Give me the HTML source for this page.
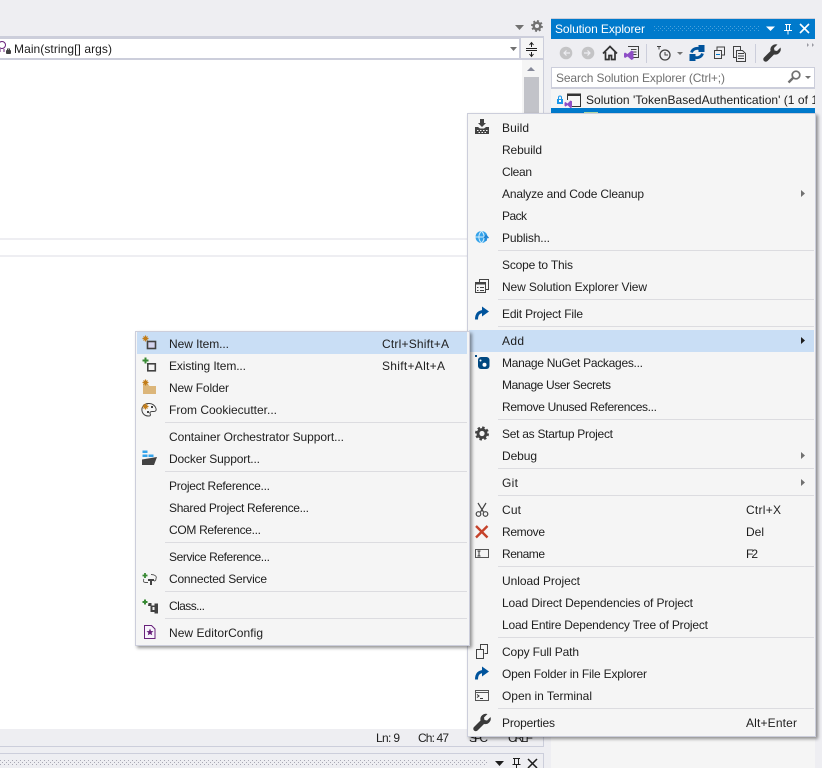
<!DOCTYPE html>
<html><head><meta charset="utf-8">
<style>
html,body{margin:0;padding:0;background:#eeeef2;overflow:hidden}
svg{display:block;position:absolute;left:0;top:0}
text{font-family:"Liberation Sans",sans-serif;font-size:12px;fill:#1e1e1e}
</style></head><body>
<svg width="822" height="768" viewBox="0 0 822 768" xmlns="http://www.w3.org/2000/svg">
<defs>
<filter id="sh" x="-5%" y="-5%" width="110%" height="110%"><feDropShadow dx="2" dy="2" stdDeviation="1.6" flood-color="#000" flood-opacity=".42"/></filter>
<pattern id="dots" width="4" height="4" patternUnits="userSpaceOnUse"><rect width="1" height="1" fill="#a8a8b4"/><rect x="2" y="2" width="1" height="1" fill="#a8a8b4"/></pattern>
<pattern id="dotsb" width="4" height="4" patternUnits="userSpaceOnUse"><rect width="1" height="1" fill="#4aa2dc"/><rect x="2" y="2" width="1" height="1" fill="#4aa2dc"/></pattern>
</defs>
<rect width="822" height="768" fill="#eeeef2"/>

<!-- editor -->
<rect x="0" y="36" width="544" height="711" fill="#cccedb"/>
<rect x="0" y="39" width="519" height="19" fill="#fff"/>
<rect x="521" y="38" width="22" height="20" fill="#f5f5f5"/>
<rect x="0" y="60" width="522" height="669" fill="#fff"/>
<rect x="522" y="60" width="21" height="669" fill="#f5f5f5"/>
<rect x="0" y="729" width="543" height="17" fill="#eeeef2"/>
<rect x="524" y="77" width="15" height="200" fill="#c2c3c9"/>
<path d="M527 71l4-4 4 4z" fill="#868999"/>
<rect x="0" y="238" width="522" height="2" fill="#eeeef2"/>
<rect x="0" y="255" width="522" height="2" fill="#eeeef2"/>
<path d="M515 25h9l-4.500 5z" fill="#717171"/>
<g transform="translate(537,26)"><circle r="3.300" fill="none" stroke="#717171" stroke-width="2.500"/><circle r="5" fill="none" stroke="#717171" stroke-width="1.800" stroke-dasharray="2 1.900"/></g>
<path d="M510 47h7l-3.500 4z" fill="#717171"/>
<path d="M526 48.500h11M526 50.500h11" stroke="#1e1e1e" stroke-width="1"/>
<path d="M531.500 43v4M531.500 52v4M529.500 45l2-2.500 2 2.500M529.500 54l2 2.500 2-2.500" stroke="#1e1e1e" fill="none"/>
<g fill="none" stroke="#68217a"><circle cx="2" cy="45" r="3.500"/><path d="M0 49v3M4 49v3"/></g>
<rect x="6" y="50" width="5" height="4" rx="1" fill="#424242"/><path d="M7.500 50v-1h2v1" stroke="#424242" fill="none"/>
<text x="14" y="53" textLength="98" lengthAdjust="spacing">Main(string[] args)</text>

<!-- status -->
<text x="376" y="742" textLength="24" lengthAdjust="spacing">Ln: 9</text>
<text x="418" y="742" textLength="31" lengthAdjust="spacing">Ch: 47</text>
<text x="469" y="742" textLength="19" lengthAdjust="spacing">SPC</text>
<text x="508" y="742" textLength="25" lengthAdjust="spacing">CRLF</text>

<!-- bottom pane header -->
<rect x="0" y="746" width="544" height="1" fill="#cccedb"/>
<rect x="0" y="747" width="551" height="6" fill="#eeeef2"/>
<rect x="0" y="753" width="544" height="15" fill="#cccedb"/>
<rect x="0" y="754" width="543" height="14" fill="#eeeef2"/>
<rect x="0" y="760" width="487" height="6" fill="url(#dots)"/>
<path d="M495 761h9l-4.500 5z" fill="#1e1e1e"/>
<path d="M513 758.500h7M514.500 758.500v6h4v-6M512.500 764.500h8M516.500 764.500v4" stroke="#1e1e1e" fill="none"/>
<path d="M528 759l9 9M537 759l-9 9" stroke="#1e1e1e" stroke-width="1.500"/>

<!-- solution explorer -->
<rect x="551" y="18" width="264" height="750" fill="#f5f5f5"/>
<rect x="551" y="18" width="264" height="21" fill="#007acc"/>
<rect x="551" y="18" width="264" height="1" fill="#cccedb"/>
<rect x="551" y="39" width="264" height="29" fill="#eeeef2"/>
<rect x="551" y="67" width="264" height="22" fill="#cccedb"/>
<rect x="552" y="68" width="262" height="19" fill="#fff"/>
<rect x="551" y="108" width="264" height="10" fill="#007acc"/>
<rect x="584" y="112" width="14" height="6" fill="#b5d9a5"/>
<text x="555" y="33" textLength="90" lengthAdjust="spacing" style="fill:#fff">Solution Explorer</text>
<rect x="653" y="25" width="107" height="6" fill="url(#dotsb)"/>
<path d="M766 26.500h9l-4.500 4.500z" fill="#fff"/>
<path d="M785 24.500h6M786.500 24.500v6h3v-6M784 30.500h8M788 30.500v4" stroke="#fff" fill="none"/>
<path d="M800 24l9 9M809 24l-9 9" stroke="#fff" stroke-width="1.600"/>

<!-- SE toolbar -->
<circle cx="566" cy="53" r="6.300" fill="#c4c4c6"/><path d="M570 53h-6M566.500 50.500l-2.500 2.500 2.500 2.500" stroke="#eeeef2" fill="none" stroke-width="1.200"/>
<circle cx="588" cy="53" r="6.300" fill="#c4c4c6"/><path d="M584 53h6M587.500 50.500l2.500 2.500-2.500 2.500" stroke="#eeeef2" fill="none" stroke-width="1.200"/>
<path d="M603 53.500l7-7 7 7M605.500 52v7.500h3.500v-4h2.500v4h3.500v-7.500" fill="none" stroke="#333" stroke-width="1.700"/>
<path d="M628 46.500h10.500v11h-5" fill="none" stroke="#424242"/><path d="M631 49.500h5.500M631 52h5.500M633 54.500h3.500" stroke="#424242"/>
<path d="M625 52.500l2.500 1.500 4-3.500 2 1v7.500l-2 1-4-3.500-2.500 1.500-1-1v-3.500z" fill="#8e4ec6"/>
<rect x="646" y="44" width="1" height="19" fill="#cccedb"/>
<circle cx="665" cy="55" r="5" fill="none" stroke="#424242" stroke-width="1.300"/><path d="M665 52v3h3M657 46.500h4M659 46.500v3" stroke="#424242" fill="none"/>
<path d="M677 52h6l-3 3z" fill="#717171"/>
<g fill="none" stroke="#00539c" stroke-width="2.800"><path d="M691.500 52.500a6 5.500 0 0 1 9.500-3"/><path d="M702.500 53.500a6 5.500 0 0 1-9.500 3"/></g>
<path d="M698.500 45h1l5 0v7h-6zM695.500 61h-6v-7h6z" fill="#00539c"/>
<path d="M714.500 50.500h7v8h-7zM717 50v-3h7.500v8h-3" fill="none" stroke="#424242"/><path d="M716 54.500h4" stroke="#007acc"/>
<path d="M736.500 50.500h6l3 3v8h-9zM736 57.500h-2.500v-11h7v3.500" fill="none" stroke="#424242"/><path d="M738 53.500h6M738 56h6M738 58.500h6" stroke="#424242"/>
<rect x="755" y="44" width="1" height="19" fill="#cccedb"/>
<path d="M764 57.500l6.500-6.500a5.500 5.500 0 0 1 7-6.500l-3.500 3.500 .5 2.500 2.500.5 3.500-3.500a5.500 5.500 0 0 1-6.500 7l-6.500 6.500a2.200 2.200 0 0 1-3.500-3.500z" fill="#3a3a3a"/>
<path d="M807 43l2 2-2 2zM812 43l2 2-2 2z" fill="#9a9aa2"/>
<text x="556" y="82" textLength="169" lengthAdjust="spacing" style="fill:#717171">Search Solution Explorer (Ctrl+;)</text>
<circle cx="796" cy="75" r="3.800" fill="none" stroke="#717171" stroke-width="1.700"/><path d="M793 78l-4.500 4.500" stroke="#717171" stroke-width="2.400"/>
<path d="M805 76h6l-3 3z" fill="#717171"/>

<rect x="557" y="99" width="6" height="5" fill="#1c97ea"/><rect x="559" y="100" width="2" height="2" fill="#fff"/><path d="M558.500 99v-1.500a1.500 1.500 0 0 1 3 0v1.500" fill="none" stroke="#1c97ea"/>
<path d="M570 106.500h10.500v-12.500h-13v6" fill="none" stroke="#333"/><rect x="567" y="94" width="14" height="2" fill="#333"/>
<path d="M565.500 102l2 1.500 3-3 1.500.8v6l-1.500.8-3-3-2 1.500-1-.8v-3z" fill="#8e4ec6"/>
<text x="586" y="104" textLength="232" lengthAdjust="spacing">Solution 'TokenBasedAuthentication' (1 of 1</text>
<rect x="815" y="18" width="7" height="750" fill="#eeeef2"/>

<!-- right context menu -->
<g filter="url(#sh)"><rect x="467.500" y="113.500" width="348" height="623" fill="#f5f5f5" stroke="#cccedb"/></g>
<rect x="469" y="330" width="345" height="22" fill="#c9def5"/>
<g fill="#dcdce0">
<rect x="498" y="250" width="316" height="1"/><rect x="498" y="299" width="316" height="1"/><rect x="498" y="326" width="316" height="1"/><rect x="498" y="419" width="316" height="1"/><rect x="498" y="468" width="316" height="1"/><rect x="498" y="495" width="316" height="1"/><rect x="498" y="566" width="316" height="1"/><rect x="498" y="637" width="316" height="1"/><rect x="498" y="708" width="316" height="1"/>
</g>
<g>
<text x="502" y="132" textLength="27" lengthAdjust="spacing">Build</text>
<text x="502" y="154" textLength="40" lengthAdjust="spacing">Rebuild</text>
<text x="502" y="176" textLength="30" lengthAdjust="spacing">Clean</text>
<text x="502" y="198" textLength="142" lengthAdjust="spacing">Analyze and Code Cleanup</text>
<text x="502" y="220" textLength="25" lengthAdjust="spacing">Pack</text>
<text x="502" y="242" textLength="48" lengthAdjust="spacing">Publish...</text>
<text x="502" y="269" textLength="71" lengthAdjust="spacing">Scope to This</text>
<text x="502" y="291" textLength="145" lengthAdjust="spacing">New Solution Explorer View</text>
<text x="502" y="318" textLength="81" lengthAdjust="spacing">Edit Project File</text>
<text x="502" y="345" textLength="22" lengthAdjust="spacing">Add</text>
<text x="502" y="367" textLength="141" lengthAdjust="spacing">Manage NuGet Packages...</text>
<text x="502" y="389" textLength="109" lengthAdjust="spacing">Manage User Secrets</text>
<text x="502" y="411" textLength="155" lengthAdjust="spacing">Remove Unused References...</text>
<text x="502" y="438" textLength="111" lengthAdjust="spacing">Set as Startup Project</text>
<text x="502" y="460" textLength="35" lengthAdjust="spacing">Debug</text>
<text x="502" y="487" textLength="16" lengthAdjust="spacing">Git</text>
<text x="502" y="514" textLength="19" lengthAdjust="spacing">Cut</text>
<text x="502" y="536" textLength="43" lengthAdjust="spacing">Remove</text>
<text x="502" y="558" textLength="43" lengthAdjust="spacing">Rename</text>
<text x="502" y="585" textLength="78" lengthAdjust="spacing">Unload Project</text>
<text x="502" y="607" textLength="191" lengthAdjust="spacing">Load Direct Dependencies of Project</text>
<text x="502" y="629" textLength="206" lengthAdjust="spacing">Load Entire Dependency Tree of Project</text>
<text x="502" y="656" textLength="77" lengthAdjust="spacing">Copy Full Path</text>
<text x="502" y="678" textLength="145" lengthAdjust="spacing">Open Folder in File Explorer</text>
<text x="502" y="700" textLength="90" lengthAdjust="spacing">Open in Terminal</text>
<text x="502" y="727" textLength="53" lengthAdjust="spacing">Properties</text>
<text x="746" y="514" textLength="35" lengthAdjust="spacing">Ctrl+X</text>
<text x="746" y="536" textLength="18" lengthAdjust="spacing">Del</text>
<text x="746" y="558" textLength="12" lengthAdjust="spacing">F2</text>
<text x="746" y="727" textLength="51" lengthAdjust="spacing">Alt+Enter</text>
</g>
<path d="M801 190l4 3.500-4 3.500zM801 452l4 3.500-4 3.500zM801 479l4 3.500-4 3.500z" fill="#717171"/>
<path d="M801 337l4 3.500-4 3.500z" fill="#1e1e1e"/>
<!-- right icons -->
<path d="M480 119h4v4h2l-4 4-4-4h2z" fill="#424242"/>
<path d="M475 134v-7h3l2 1.500h4l2-1.500h3v7z" fill="#424242"/>
<path d="M477 130.500h1.500M480 130.500h1.500M483 130.500h1.500M486 130.500h1.500M478.500 132.500h1.500M481.500 132.500h1.500M484.500 132.500h1.500" stroke="#f5f5f5"/>
<circle cx="481.500" cy="237" r="6" fill="#35a3ea"/><path d="M475.500 237h12M481.500 231c-3.500 3.500-3.500 8.500 0 12M481.500 231c3.500 3.500 3.500 8.500 0 12" fill="none" stroke="#d4ecfb"/>
<path d="M486 241v-5M484 238l2-2.500 2.500 2.500" stroke="#1c7fd0" fill="none" stroke-width="1.300"/>
<path d="M479.500 283v-3.500h9v10h-3" fill="none" stroke="#424242"/><rect x="475.500" y="282.500" width="10" height="10" fill="#f5f5f5" stroke="#424242"/><rect x="475.500" y="282.500" width="10" height="2" fill="#424242"/><path d="M477 287.500h1.500M480 287.500h4M477 290.500h1.500M480 290.500h4" stroke="#424242"/>
<path d="M476.500 319.500c0-5.500 2.500-8 7.500-8" fill="none" stroke="#00539c" stroke-width="3"/><path d="M482 306.500l7 5-7 5z" fill="#00539c"/>
<rect x="478" y="357" width="11.500" height="12" rx="3" fill="#004880"/><circle cx="484.500" cy="364.800" r="2" fill="#fff"/><circle cx="480.500" cy="360.500" r="1" fill="#fff"/><rect x="475" y="355" width="2" height="2" fill="#004880"/>
<g transform="translate(482,433.500)"><circle r="4" fill="none" stroke="#424242" stroke-width="2.800"/><circle r="6" fill="none" stroke="#424242" stroke-width="2" stroke-dasharray="2.500 2.200"/></g>
<g fill="none" stroke="#424242" stroke-width="1.200"><path d="M478 503l5.500 9M486 503l-5.500 9"/><circle cx="478.500" cy="514" r="2.300"/><circle cx="485.500" cy="514" r="2.300"/></g>
<path d="M476 526l11.500 11.500M487.500 526l-11.500 11.500" stroke="#c5422a" stroke-width="2.400"/>
<rect x="475.500" y="549.500" width="13" height="8" fill="#f5f5f5" stroke="#555"/><path d="M477.500 551h3M477.500 556h3M479 551v5" stroke="#333" fill="none"/>
<path d="M480.500 649v-4.500h7v9h-3" fill="none" stroke="#424242"/><rect x="476.500" y="649.500" width="7" height="9" fill="#f5f5f5" stroke="#424242"/>
<path d="M476.500 679.500c0-5.500 2.500-8 7.500-8" fill="none" stroke="#00539c" stroke-width="3"/><path d="M482 666.500l7 5-7 5z" fill="#00539c"/>
<rect x="475.500" y="690.500" width="13" height="10" fill="#f5f5f5" stroke="#555"/><path d="M475.500 692.500h13" stroke="#555"/><path d="M477 694.500l2 1.500-2 1.500M480 698.500h3" fill="none" stroke="#333"/>
<path d="M475 725l6.500-6.500a5.500 5.500 0 0 1 7-6.500l-3.500 3.500 .5 2.500 2.500.5 3.500-3.500a5.500 5.500 0 0 1-6.500 7l-6.500 6.500a2.200 2.200 0 0 1-3.500-3.500z" fill="#3a3a3a" transform="translate(-1,2)"/>

<!-- left submenu -->
<g filter="url(#sh)"><rect x="135.500" y="331.500" width="334" height="314" fill="#f5f5f5" stroke="#cccedb"/></g>
<rect x="137" y="332" width="330" height="22" fill="#c9def5"/>
<g fill="#dcdce0">
<rect x="165" y="422" width="302" height="1"/><rect x="165" y="471" width="302" height="1"/><rect x="165" y="542" width="302" height="1"/><rect x="165" y="591" width="302" height="1"/><rect x="165" y="618" width="302" height="1"/>
</g>
<text x="169" y="348" textLength="60" lengthAdjust="spacing">New Item...</text>
<text x="169" y="370" textLength="77" lengthAdjust="spacing">Existing Item...</text>
<text x="169" y="392" textLength="60" lengthAdjust="spacing">New Folder</text>
<text x="169" y="414" textLength="108" lengthAdjust="spacing">From Cookiecutter...</text>
<text x="169" y="441" textLength="175" lengthAdjust="spacing">Container Orchestrator Support...</text>
<text x="169" y="463" textLength="91" lengthAdjust="spacing">Docker Support...</text>
<text x="169" y="490" textLength="101" lengthAdjust="spacing">Project Reference...</text>
<text x="169" y="512" textLength="140" lengthAdjust="spacing">Shared Project Reference...</text>
<text x="169" y="534" textLength="92" lengthAdjust="spacing">COM Reference...</text>
<text x="169" y="561" textLength="101" lengthAdjust="spacing">Service Reference...</text>
<text x="169" y="583" textLength="98" lengthAdjust="spacing">Connected Service</text>
<text x="169" y="610" textLength="36" lengthAdjust="spacing">Class...</text>
<text x="169" y="637" textLength="94" lengthAdjust="spacing">New EditorConfig</text>
<text x="382" y="348" textLength="67" lengthAdjust="spacing">Ctrl+Shift+A</text>
<text x="382" y="370" textLength="63" lengthAdjust="spacing">Shift+Alt+A</text>
<!-- left icons -->
<rect x="147.500" y="341.500" width="8" height="7" fill="#d4d4ee" stroke="#424242" stroke-width="1.600"/>
<path d="M142.500 338.500h6M145.500 335.500v6M143.500 336.500l4 4M147.500 336.500l-4 4" stroke="#c27d1a" stroke-width="1.200"/>
<rect x="147.800" y="363.800" width="7.500" height="7" fill="#f5f5f5" stroke="#424242" stroke-width="1.600"/>
<path d="M142.500 360.500h6M145.500 357.500v6" stroke="#388a34" stroke-width="2"/>
<path d="M143 394v-10h5l1.500 2h6.500v8z" fill="#dcb67a"/>
<path d="M142.500 382.500h6M145.500 379.500v6M143.500 380.500l4 4M147.500 380.500l-4 4" stroke="#c27d1a" stroke-width="1.200"/>
<path d="M149 403.500a6.300 6.300 0 1 0 0 12.500c2 0 1.500-2 1-2.500-.5-1 .5-2 2-2h2c2 0 2.500-1.500 2-3a7 7 0 0 0-7-5z" fill="#f5f5f5" stroke="#424242"/>
<path d="M142.500 406.500h6M145.500 403.500v6M143.500 404.500l4 4M147.500 404.500l-4 4" stroke="#c27d1a" stroke-width="1.200"/>
<rect x="151" y="406" width="2" height="2" fill="#424242"/><rect x="147" y="411" width="2" height="2" fill="#424242"/>
<path d="M142 459.500l15-2.500-3 8h-12z" fill="#424242"/>
<rect x="142.500" y="450.500" width="5" height="2.500" fill="#35a3ea" stroke="none"/><rect x="142.500" y="454.500" width="5" height="2.500" fill="#35a3ea"/><rect x="148.500" y="454.500" width="5" height="2.500" fill="#35a3ea"/>
<path d="M142.500 575.500h5M145 573v5" stroke="#388a34" stroke-width="1.800"/>
<path d="M151 574.500a5 3 0 0 1 5 4c0 2-1 2.500-2 2.500M144 579c-1 1-1 3 1 3.500h3" fill="none" stroke="#555" stroke-width=".9"/><path d="M148 579h6v2h-2v4h-2v-4h-2z" fill="#424242"/>
<path d="M142.500 602h5M145 599.500v5" stroke="#388a34" stroke-width="2"/>
<path d="M148.500 603h3v2.500h3v-2h3.500v5h-3.500v-1.500h-2v3h2v-1.500h3.500v5h-3.500v-1.500h-4v-6h-2.500z" fill="#424242"/>
<path d="M144.500 625.500h7l3.500 3.500v9.500h-10.500z" fill="#f8f4fc" stroke="#68217a"/>
<path d="M150 628.500l1 2.500 2.500.2-1.900 1.600.6 2.500-2.200-1.300-2.200 1.300.6-2.500-1.900-1.600 2.500-.2z" fill="#68217a"/>
</svg>
</body></html>
